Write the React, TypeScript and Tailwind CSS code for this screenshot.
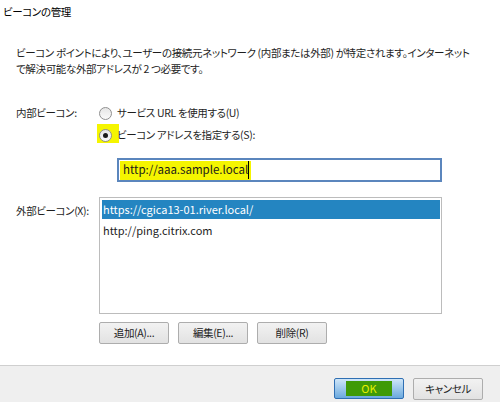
import React from 'react';

const jp = "[font-family:'Noto_Sans_CJK_JP','Noto_Sans_CJK_SC',sans-serif] [font-feature-settings:'palt']";
const jpText = 'text-[10.5px] tracking-[-0.35px]';

const Radio: React.FC<{ checked?: boolean }> = ({ checked }) => (
  <span className="w-[13px] h-[13px] rounded-full border border-[#8f8f8f] bg-gradient-to-b from-[#e6e6e6] to-[#fafafa] flex items-center justify-center shrink-0">
    {checked && <span className="w-[5px] h-[5px] rounded-full bg-[#1a1a1a]" />}
  </span>
);

const Btn: React.FC<{ label: string }> = ({ label }) => (
  <button className={`w-[70px] h-[22px] rounded-[2px] border border-[#adadad] bg-gradient-to-b from-[#f2f2f2] to-[#e2e2e2] ${jpText} text-[#222] leading-none`}>
    {label}
  </button>
);

export default function App() {
  return (
    <div className={`w-[500px] h-[402px] bg-white flex flex-col text-[#1e1e1e] ${jp}`}>
      <div className="flex-1">
        <div className={`pl-[3px] pt-[4px] h-[20px] ${jpText} leading-[16px] text-black`}>ビーコンの管理</div>

        <p className={`mt-[25px] px-[16px] ${jpText} leading-[16px] whitespace-nowrap`}>
          ビーコン ポイントにより、ユーザーの接続元ネットワーク (内部または外部) が特定されます。インターネット
          <br />
          で解決可能な外部アドレスが 2 つ必要です。
        </p>

        <div className={`mt-[26px] flex ${jpText}`}>
          <div className="w-[99px] shrink-0 pl-[16px] h-[20px] leading-[20px] whitespace-nowrap">内部ビーコン:</div>
          <div className="flex flex-col whitespace-nowrap">
            <label className="h-[22px] -mt-[1px] flex items-center gap-[5px]">
              <Radio />
              <span>サービス URL を使用する(U)</span>
            </label>
            <label className="h-[22px] flex items-center gap-[5px]">
              <span className="relative flex items-center">
                <span className="absolute -left-[2px] -top-[5px] w-[22px] h-[19px] bg-[#f5f500]" />
                <span className="relative"><Radio checked /></span>
              </span>
              <span className="relative">ビーコン アドレスを指定する(S):</span>
            </label>
          </div>
        </div>

        <div className="mt-[12px] ml-[117px] w-[325px] h-[24px] border-2 border-[#5b86bd] flex items-center pl-[1px]">
          <span className="bg-[#f5f500] h-[19px] flex items-center pl-[3px] pr-[2px] text-[11.5px] text-[#1a1a1a]">
            http://aaa.sample.loca<span className="border-r border-black">l</span>
          </span>
        </div>

        <div className={`mt-[15px] flex ${jpText}`}>
          <div className="w-[99px] shrink-0 pl-[16px] pt-[6px] leading-[16px] whitespace-nowrap">外部ビーコン(X):</div>
          <div className="w-[343px] h-[117px] border border-[#bcbcbc] p-[2px] pr-[1px] text-[11px] tracking-normal">
            <div className="h-[19px] bg-[#2485c1] text-white leading-[19px] pl-[1px]">https://cgica13-01.river.local/</div>
            <div className="h-[22px] leading-[22px] pl-[1px]">http://ping.citrix.com</div>
          </div>
        </div>

        <div className="mt-[8px] ml-[99px] flex gap-[9px]">
          <Btn label="追加(A)..." />
          <Btn label="編集(E)..." />
          <Btn label="削除(R)" />
        </div>
      </div>

      <div className="h-[37px] border-t border-[#cfcfcf] bg-[#efefef] flex items-start justify-end gap-[9px] pr-[17px] pt-[12px]">
        <button className="w-[70px] h-[21px] rounded-[2px] border border-[#2f6fb3] bg-gradient-to-b from-[#cfe6f8] to-[#6aa9de] p-[2px] flex">
          <span className="flex-1 mx-[9px] bg-[#3f9a07] text-[#e6f000] text-[11px] leading-[15px] flex items-center justify-center">OK</span>
        </button>
        <Btn label="キャンセル" />
      </div>
    </div>
  );
}
